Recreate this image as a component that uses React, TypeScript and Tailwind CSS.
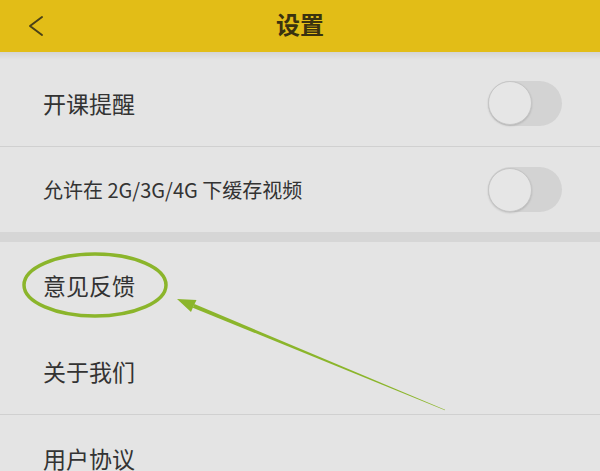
import React from 'react';

const Toggle = () => (
    <div className="w-[74px] h-[45px] rounded-full bg-[#d3d3d3] flex items-center">
        <div className="w-[44px] h-[44px] rounded-full bg-[#e6e6e6] border border-[#c6c6c6] shadow-[0_1px_2px_rgba(0,0,0,0.15)]" />
    </div>
);

const Row = ({ label, small, toggle, divider, h }: { label: string; small?: boolean; toggle?: boolean; divider?: boolean; h: string }) => (
    <div className={`${h} flex items-center justify-between pl-[43px] pr-[38px] ${divider ? 'border-b border-[#d0d0d0]' : ''}`}>
        <span className={small ? 'text-[20px] text-[#333]' : 'text-[23px] text-[#333]'}>{label}</span>
        {toggle && <Toggle />}
    </div>
);

export default function App() {
    return (
        <div
            className="relative w-full h-[471px] overflow-hidden bg-[#e4e4e4]"
            style={{ fontFamily: '"Noto Sans CJK SC", "Noto Sans", sans-serif' }}
        >
            <div className="h-[52px] bg-[#e2bd17] grid grid-cols-[1fr_auto_1fr] items-center">
                <div className="pl-[27px]">
                    <svg width="18" height="22" viewBox="0 0 18 22">
                        <path d="M15 2 L3 11 L15 20" fill="none" stroke="#4a4118" strokeWidth="2" strokeLinecap="round" strokeLinejoin="round" />
                    </svg>
                </div>
                <div className="text-[24px] font-bold text-[#3a3210] leading-none pb-[4px]">设置</div>
                <div />
            </div>
            <div className="h-[8px] bg-gradient-to-b from-[#d4d4d4] to-[#e4e4e4]" />

            <Row h="h-[87px]" label="开课提醒" toggle divider />
            <Row h="h-[85px]" label="允许在 2G/3G/4G 下缓存视频" small toggle />
            <div className="h-[10px] bg-[#d6d6d6]" />
            <Row h="h-[87px]" label="意见反馈" />
            <Row h="h-[86px]" label="关于我们" divider />
            <Row h="h-[86px]" label="用户协议" />

            <svg className="absolute inset-0 pointer-events-none" width="600" height="471" viewBox="0 0 600 471">
                <ellipse cx="95" cy="285" rx="71" ry="31" fill="none" stroke="#8bb52b" strokeWidth="3.5" />
                <polygon points="194.4,304.1 445.1,409.7 444.9,410.3 192.8,307.7" fill="#8bb52b" />
                <polygon points="177,299 196.5,300 193.6,305.9 191,312" fill="#8bb52b" />
            </svg>
        </div>
    );
}
